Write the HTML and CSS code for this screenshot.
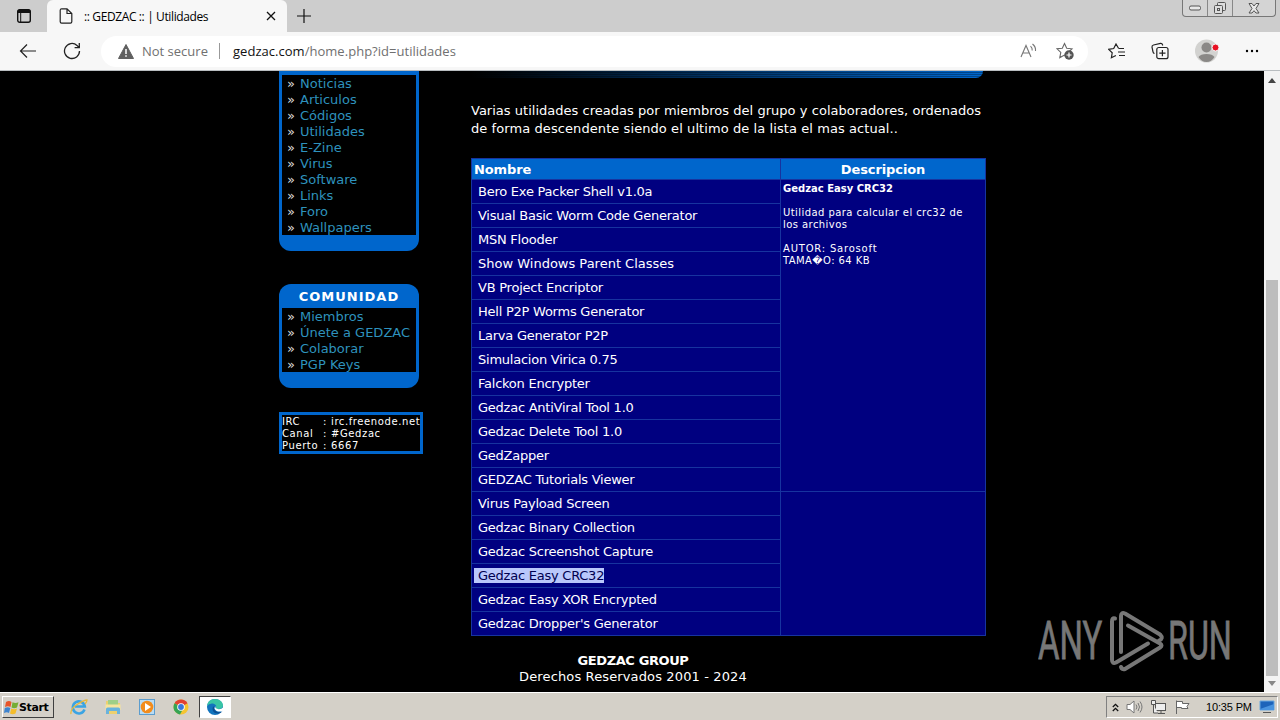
FILE: index.html
```html
<!DOCTYPE html>
<html lang="es">
<head>
    <meta charset="UTF-8">
    <title>:: GEDZAC :: | Utilidades</title>
    <link rel="stylesheet" href="styles.css">
</head>
<body>
    <div class="tabstrip">
        <svg class="tab-actions" width="16" height="16" viewBox="0 0 16 16"><rect x="1.7" y="1.7" width="12.6" height="12.6" rx="2" fill="none" stroke="#111" stroke-width="1.4"/><path d="M1.5 3.5q0-2 2-2h9q2 0 2 2V5h-13z" fill="#111"/><path d="M4.7 5v9" stroke="#111"/></svg>
        <div class="tab">
            <svg width="14" height="16" viewBox="0 0 14 16" fill="none" stroke="#222" stroke-width="1.2"><path d="M8 .8H2.6Q1.2.8 1.2 2.2v11.6q0 1.4 1.4 1.4h8.8q1.4 0 1.4-1.4V5.5zM8 .8v4.700h4.800"/></svg>
            <span class="tab-title">:: GEDZAC :: | Utilidades</span>
            <svg width="10" height="10" viewBox="0 0 10 10" stroke="#111" stroke-width="1.3"><path d="M1 1l8 8M9 1L1 9"/></svg>
        </div>
        <svg class="new-tab" width="16" height="16" viewBox="0 0 16 16" stroke="#111" stroke-width="1.2"><path d="M8 1v14M1 8h14"/></svg>
        <div class="win-buttons">
            <span class="win-btn"><svg width="12" height="6" viewBox="0 0 12 6"><rect x=".5" y="1" width="11" height="4" rx="1.5" fill="#e8e8e8" stroke="#555"/></svg></span>
            <span class="win-btn"><svg width="14" height="14" viewBox="0 0 14 14" fill="#ddd" stroke="#555"><rect x="4.500" y="1.500" width="8" height="8" rx="1"/><rect x="1.500" y="4.500" width="8" height="8" rx="1"/><rect x="4.500" y="7.500" width="2" height="2"/></svg></span>
            <span class="win-btn win-close"><svg width="12" height="11" viewBox="0 0 12 11" fill="#e8e8e8" stroke="#555"><path d="M1 .5h3L6 3l2-2.500h3L8 5.500l3 4.500H8L6 7.700 4 10H1l3-4.500z"/></svg></span>
        </div>
    </div>

    <div class="toolbar">
        <span class="tool back"><svg width="18" height="16" viewBox="0 0 18 16" fill="none" stroke="#222" stroke-width="1.2"><path d="M17 8H1.500M8 1.500L1.500 8 8 14.500"/></svg></span>
        <span class="tool reload"><svg width="18" height="18" viewBox="0 0 18 18" fill="none" stroke="#222" stroke-width="1.3"><path d="M16.500 9A7.500 7.500 0 1 1 14 3.400L16 5.500M16.300 1v4.700h-4.700"/></svg></span>
        <div class="address">
            <svg width="16" height="15" viewBox="0 0 16 15"><path d="M8 .5L15.500 14.500H.5z" fill="#606060" stroke="#606060" stroke-linejoin="round"/><path d="M8 5v5M8 11.200v1.500" stroke="#fff" stroke-width="1.5"/></svg>
            <span class="not-secure">Not secure</span>
            <span class="divider"></span>
            <span class="url"><span class="host">gedzac.com</span>/home.php?id=utilidades</span>
            <svg class="read-aloud" width="17" height="16" viewBox="0 0 17 16" fill="none" stroke="#777" stroke-width="1.1"><path d="M1 14L6 2.500 11 14M2.800 10h6.500M10.500 3.200q2 1.800 1.700 4.300M12.500 1q3.500 2.800 3 7"/></svg>
            <svg width="18" height="18" viewBox="0 0 18 18"><path d="M8.500 1.500l2.200 4.700 5.300.6-3.900 3.600 1 5.200-4.600-2.500-4.700 2.500 1-5.200L1 6.800l5.300-.6z" fill="none" stroke="#666" stroke-width="1.1"/><circle cx="13" cy="13" r="4.700" fill="#555"/><path d="M13 10.500v5M10.500 13h5" stroke="#fff" stroke-width="1.2"/></svg>
        </div>
        <span class="tool favorites"><svg width="18" height="16" viewBox="0 0 18 16" fill="none" stroke="#222" stroke-width="1.2"><path d="M10.500 5.300L8 1 5.700 5.500l-5 .8 3.500 3.500-.8 5 4.500-2.300M10.500 5.500H16M10 9h7M11 12.500h6"/></svg></span>
        <span class="tool collections"><svg width="18" height="18" viewBox="0 0 18 18" fill="none" stroke="#222" stroke-width="1.2"><path d="M3.500 11.500q-1.200-.3-1.500-1.700L1 5.200q-.2-1.800 1.500-2.200l7-1.700q1.600-.2 2 1.400l.2.800"/><rect x="5.800" y="5.500" width="11.2" height="11.2" rx="2"/><path d="M11.400 8v6.200M8.300 11.100h6.200"/></svg></span>
        <span class="tool profile"><svg width="24" height="24" viewBox="0 0 24 24"><circle cx="11.500" cy="12" r="11.500" fill="#d2d2d0"/><circle cx="11.500" cy="8.500" r="5" fill="#8a8886"/><path d="M3.500 18q2-3 8-3t8 3q-3 5-8 5t-8-5z" fill="#8a8886"/><circle cx="20.500" cy="8.500" r="3.500" fill="#e81123" stroke="#f7f7f7"/></svg></span>
        <span class="tool more"><svg width="14" height="4" viewBox="0 0 14 4"><circle cx="2" cy="2" r="1.200"/><circle cx="7" cy="2" r="1.200"/><circle cx="12" cy="2" r="1.200"/></svg></span>
    </div>

    <div class="viewport">
        <div class="page">
            <div class="sidebar">
                <div class="menu menu-main">
                    <ul>
                        <li><a>Noticias</a></li>
                        <li><a>Articulos</a></li>
                        <li><a>Códigos</a></li>
                        <li><a>Utilidades</a></li>
                        <li><a>E-Zine</a></li>
                        <li><a>Virus</a></li>
                        <li><a>Software</a></li>
                        <li><a>Links</a></li>
                        <li><a>Foro</a></li>
                        <li><a>Wallpapers</a></li>
                    </ul>
                </div>
                <div class="menu">
                    <h2>COMUNIDAD</h2>
                    <ul>
                        <li><a>Miembros</a></li>
                        <li><a>Únete a GEDZAC</a></li>
                        <li><a>Colaborar</a></li>
                        <li><a>PGP Keys</a></li>
                    </ul>
                </div>
                <div class="irc">
                    <span>IRC</span><span>:</span><span>irc.freenode.net</span>
                    <span>Canal</span><span>:</span><span>#Gedzac</span>
                    <span>Puerto</span><span>:</span><span>6667</span>
                </div>
            </div>

            <div class="content">
                <div class="banner"></div>
                <p class="intro">Varias utilidades creadas por miembros del grupo y colaboradores, ordenados <span class="second">de forma descendente siendo el ultimo de la lista el mas actual..</span></p>
                <div class="utils">
                    <div class="names">
                        <div class="head">Nombre</div>
                        <div class="row">Bero Exe Packer Shell v1.0a</div>
                        <div class="row">Visual Basic Worm Code Generator</div>
                        <div class="row">MSN Flooder</div>
                        <div class="row wide">Show Windows Parent Classes</div>
                        <div class="row">VB Project Encriptor</div>
                        <div class="row">Hell P2P Worms Generator</div>
                        <div class="row">Larva Generator P2P</div>
                        <div class="row">Simulacion Virica 0.75</div>
                        <div class="row">Falckon Encrypter</div>
                        <div class="row">Gedzac AntiViral Tool 1.0</div>
                        <div class="row">Gedzac Delete Tool 1.0</div>
                        <div class="row">GedZapper</div>
                        <div class="row">GEDZAC Tutorials Viewer</div>
                        <div class="row">Virus Payload Screen</div>
                        <div class="row">Gedzac Binary Collection</div>
                        <div class="row">Gedzac Screenshot Capture</div>
                        <div class="row"><span class="selected">Gedzac Easy CRC32</span></div>
                        <div class="row">Gedzac Easy XOR Encrypted</div>
                        <div class="row">Gedzac Dropper's Generator</div>
                    </div>
                    <div class="details">
                        <div class="head">Descripcion</div>
                        <div class="description">
                            <b>Gedzac Easy CRC32</b><br><br>
                            Utilidad para calcular el crc32 de<br>los archivos<br><br>
                            <span class="author">AUTOR: Sarosoft</span><br>
                            TAMA&#xFFFD;O: 64 KB
                        </div>
                    </div>
                </div>
                <div class="footer">
                    <b>GEDZAC GROUP</b>
                    <span>Derechos Reservados 2001 - 2024</span>
                </div>
            </div>
        </div>
        <div class="scrollbar">
            <svg width="8" height="5" viewBox="0 0 8 5"><path d="M0 5l4-5 4 5z" fill="#444"/></svg>
            <div class="thumb"></div>
            <svg width="8" height="5" viewBox="0 0 8 5"><path d="M0 0l4 5 4-5z" fill="#888"/></svg>
        </div>
        <svg class="watermark" width="210" height="64" viewBox="0 0 210 64">
            <g fill="#777" stroke="#777" stroke-width=".8">
                <text transform="translate(0 50) scale(.62 1)">ANY</text>
                <text transform="translate(130 50) scale(.61 1)">RUN</text>
            </g>
            <g fill="none" stroke="#777" stroke-width="4" stroke-linecap="round" stroke-linejoin="round">
                <path d="M77 9.500q-3-1-3 3v38q0 5 4 3l32-19"/>
                <path d="M83 43V7q0-4 4-2.500l35 21q4 4-1 6"/>
                <path d="M90 16.500l32 18q3 2 0 4L87 60q-3 1-4-2"/>
            </g>
        </svg>
    </div>

    <div class="taskbar">
        <div class="start">
            <svg width="15" height="15" viewBox="0 0 15 15"><path d="M2 2q3-2 5.500 0L6.500 7Q4 5.500 1 7z" fill="#e8552a"/><path d="M8.500 2.300q3 1.500 6 0L13 7.500q-3 1.500-5.500 0z" fill="#75ad35"/><path d="M.8 8q3-1.500 5.500 0L5 13q-2-1.500-5 0z" fill="#3e84cf"/><path d="M7.300 8.500q3 1.500 5.700 0l-1.500 5q-3 1.500-5.500 0z" fill="#f4bd2b"/></svg>
            <span>Start</span>
        </div>
        <div class="launchers">
            <svg width="18" height="18" viewBox="0 0 18 18" fill="none"><path d="M14.500 11.500a6 6 0 1 1 .3-3H5" stroke="#3ba4e3" stroke-width="2.6"/><path d="M1 16Q0 11 7 6.500T17 2q0 2-2 4" stroke="#e8b93c" stroke-width="1.3"/></svg>
            <svg width="18" height="18" viewBox="0 0 18 18"><path d="M2 3h5l1 2h8v11H2z" fill="#ecd06f"/><path d="M4 2h10v6H4z" fill="#9fcf87"/><path d="M1.500 6.500h15V12h-15z" fill="#f7e49d"/><path d="M2 16v-5q0-1.500 1.500-1.500h11q1.500 0 1.500 1.500v5h-3v-3H5v3z" fill="#69b3dd"/></svg>
            <svg width="18" height="18" viewBox="0 0 18 18"><rect x="1.500" y="1.500" width="15" height="15" fill="#b9dcf4" stroke="#5c9dce"/><circle cx="9" cy="9" r="6.300" fill="#f28c1c"/><path d="M7 5l6 4-6 4z" fill="#fff"/></svg>
            <svg width="18" height="18" viewBox="0 0 18 18"><circle cx="9" cy="9" r="7.500" fill="#f5c531"/><path d="M9 9L2.500 5.200A7.500 7.500 0 0 1 15.500 5.200z" fill="#e24133"/><path d="M9 9L2.500 5.200A7.500 7.500 0 0 0 8 16.400l3-5.400z" fill="#35a455"/><circle cx="9" cy="9" r="3.800" fill="#fff"/><circle cx="9" cy="9" r="2.900" fill="#3a78dc"/></svg>
            <span class="active"><svg width="18" height="18" viewBox="0 0 18 18"><circle cx="9" cy="9" r="8" fill="#1274bd"/><path d="M1 8Q2 1 9 1t8 6.500q-.5 3.500-4.500 3.500-3.500 0-2.500-2T7 5.500Q3 5 1 8z" fill="#39c5a5"/><path d="M7 8.500q-2 6 4 7 3 .5 5.500-2-3 1.500-6 0T8.500 9z" fill="#0b4f93"/><path d="M10 8q-1 1-.3 2 1.500 1.500 4.500 1 2-.5 2.500-1.500l1.500 2.500-3 1.500q-5 .5-6.500-2.500-.7-2 1.300-3z" fill="#fff"/></svg></span>
        </div>
        <div class="tray">
            <svg width="7" height="9" viewBox="0 0 7 9" fill="none" stroke="#111" stroke-width="1.3"><path d="M.8 4l2.700-2.700L6.200 4M.8 8l2.700-2.700L6.200 8"/></svg>
            <svg width="17" height="16" viewBox="0 0 17 16" fill="none" stroke="#777"><path d="M1 5.500h3L8 2v12l-4-3.500H1z" fill="#fff"/><path d="M10 5.500q2 2.500 0 5M12 4q3 4 0 8M14 2.500q4 5.500 0 11"/></svg>
            <svg width="17" height="16" viewBox="0 0 17 16" fill="#eee" stroke="#555"><rect x="5.500" y="4.500" width="10" height="7"/><path d="M8 14.500h7M11 12v2M1.500 1.500h4v4h-4zM3.500 6v8H8"/></svg>
            <svg width="17" height="16" viewBox="0 0 17 16" fill="#fff" stroke="#666"><path d="M2.500 15V1.500M2.500 2.500h6v2H15l-2 3 1 2H7.500v-1h-5z"/></svg>
            <span class="clock">10:35 PM</span>
            <svg width="16" height="14" viewBox="0 0 16 14"><path d="M1 1h14v9H1z" fill="#1d64ba" stroke="#6aa8df"/><path d="M1 9l14-5v6H1z" fill="#4a94df"/><path d="M4 12.500h8" stroke="#555"/></svg>
        </div>
    </div>
</body>
</html>
```

FILE: styles.css
```css
* {
    box-sizing: border-box;
}

body {
    margin: 0;
    width: 1280px;
    height: 720px;
    overflow: hidden;
    display: flex;
    flex-direction: column;
    background: #000;
    font-family: "DejaVu Sans", sans-serif;
    font-size: 13px;
}

svg {
    display: block;
    flex-shrink: 0;
}

/* browser chrome */
.tabstrip {
    height: 32px;
    display: flex;
    align-items: center;
    background: #cdcdcd;
    font-family: "Open Sans", sans-serif;
}

.tab-actions {
    margin: 0 15px 0 16px;
}

.tab {
    width: 240px;
    height: 32px;
    padding: 0 11px 0 12px;
    display: flex;
    align-items: center;
    background: #f7f7f7;
    border-radius: 6px 6px 0 0;
}

.tab-title {
    flex: 1;
    padding-left: 11px;
    font-size: 12px;
    letter-spacing: -0.38px;
    white-space: nowrap;
}

.new-tab {
    margin-left: 9px;
}

.win-buttons {
    display: flex;
    align-self: flex-start;
    height: 17px;
    margin: 0 4px 0 auto;
    border: 1px solid #777;
    border-top: 0;
    border-radius: 0 0 4px 4px;
    background: #d4d4d4;
}

.win-btn {
    width: 25px;
    display: flex;
    align-items: center;
    justify-content: center;
    border-right: 1px solid #888;
}

.win-close {
    width: 42px;
    border-right: 0;
}

.toolbar {
    height: 39px;
    padding-left: 6px;
    display: flex;
    align-items: center;
    background: #f7f7f7;
    border-bottom: 1px solid #b9bdc0;
    font-family: "Open Sans", sans-serif;
    font-size: 13px;
}

.tool {
    width: 43px;
    display: flex;
    justify-content: center;
}

.back {
    width: 44px;
}

.address {
    width: 987px;
    height: 31px;
    margin: 0 7px 0 8px;
    padding: 0 14px 0 17px;
    display: flex;
    align-items: center;
    background: #fff;
    border-radius: 16px;
    color: #707070;
}

.not-secure {
    width: 85px;
    padding-left: 8px;
    white-space: nowrap;
}

.divider {
    width: 1px;
    height: 16px;
    margin-right: 13px;
    background: #999;
}

.url {
    letter-spacing: 0.03px;
}

.host {
    color: #111;
}

.read-aloud {
    margin: 0 19px 0 auto;
}

.profile {
    width: 51px;
}

.more {
    width: 40px;
}

/* page */
.viewport {
    position: relative;
    height: 621px;
    display: flex;
}

.page {
    width: 1264px;
    padding-left: 279px;
    display: flex;
    background: #000;
    color: #fff;
}

.sidebar {
    width: 144px;
    margin-right: 48px;
}

.menu {
    width: 140px;
    margin-bottom: 24px;
    padding: 0 3px 16px;
    background: #0066cc;
    border-radius: 12px;
}

.menu-main {
    margin-bottom: 33px;
    padding-top: 4px;
    border-radius: 0 0 12px 12px;
}

.menu h2 {
    height: 24px;
    margin: 0;
    font-size: 13px;
    line-height: 25px;
    letter-spacing: 1px;
    text-align: center;
}

.menu ul {
    margin: 0;
    padding: 0 0 0 5px;
    list-style: none;
    background: #000;
}

.menu li {
    height: 16px;
    line-height: 17px;
    color: #ddd;
    white-space: nowrap;
}

.menu li::before {
    content: "»";
    display: inline-block;
    width: 13px;
}

.menu a {
    color: #2e92bd;
}

.irc {
    width: 144px;
    height: 42px;
    border: 3px solid #0066cc;
    display: grid;
    grid-template-columns: 41px 8px 1fr;
    grid-auto-rows: 12px;
    font-size: 10px;
    line-height: 13px;
    letter-spacing: 0.6px;
    white-space: nowrap;
}

.content {
    width: 515px;
}

.banner {
    height: 7px;
    width: 512px;
    border-radius: 0 0 9px 0;
    background: repeating-linear-gradient(transparent 0 1px, rgba(0, 0, 0, 0.3) 1px 2px), linear-gradient(90deg, #000, #0066cc);
}

.intro {
    width: 510px;
    margin: 24px 0 20px;
    line-height: 18px;
    text-align: justify;
}

.second {
    letter-spacing: 0.08px;
}

.utils {
    height: 478px;
    display: grid;
    grid-template-columns: 308px 206px;
    background: #000080;
    border: 1px solid #17339f;
    border-right: 0;
}

.head {
    height: 20px;
    line-height: 21px;
    font-weight: bold;
    letter-spacing: -0.1px;
    background: #0066cc;
}

.names .head {
    padding-left: 2px;
}

.row {
    height: 24px;
    padding-left: 6px;
    line-height: 23px;
    letter-spacing: -0.24px;
    border-top: 1px solid #17339f;
}

.wide {
    letter-spacing: 0;
}

.details {
    border: 1px solid #17339f;
    border-width: 0 1px;
}

.details .head {
    text-align: center;
}

.description {
    height: 313px;
    padding: 3px 2px;
    border: 1px solid #17339f;
    border-width: 1px 0;
    font-size: 10px;
    line-height: 12px;
    letter-spacing: 0.43px;
    white-space: nowrap;
}

.description b {
    letter-spacing: 0;
}

.author {
    letter-spacing: 0.8px;
}

.selected {
    margin-left: -4px;
    padding-left: 4px;
    background: #b9c7fb;
    color: #000050;
}

.footer {
    width: 324px;
    margin-top: 17px;
    display: flex;
    flex-direction: column;
    align-items: center;
    line-height: 16px;
    letter-spacing: 0.13px;
    white-space: nowrap;
}

.footer b {
    letter-spacing: -0.4px;
}

.scrollbar {
    width: 16px;
    padding: 7px 0 6px;
    display: flex;
    flex-direction: column;
    align-items: center;
    background: #f3f3f3;
}

.thumb {
    width: 12px;
    height: 396px;
    margin: auto 0 5px;
    background: #bdbdbd;
}

.watermark {
    position: absolute;
    left: 1038px;
    top: 538px;
    font-family: Roboto, sans-serif;
    font-size: 53px;
}

/* windows taskbar */
.taskbar {
    height: 28px;
    padding: 3px 2px 2px;
    display: flex;
    background: #d4d0c8;
    border-top: 1px solid #fff;
    font-family: "Liberation Sans", sans-serif;
}

.start {
    width: 52px;
    padding-left: 1px;
    display: flex;
    align-items: center;
    border: 1px solid;
    border-color: #fff #404040 #404040 #fff;
    font-family: "DejaVu Sans", sans-serif;
    font-size: 11px;
    font-weight: bold;
    letter-spacing: -0.4px;
}

.launchers {
    display: flex;
    align-items: center;
    gap: 16px;
    padding-left: 16px;
}

.active {
    width: 32px;
    height: 22px;
    margin-left: -7px;
    display: flex;
    align-items: center;
    justify-content: center;
    background: #fff;
    border: 1px solid;
    border-color: #404040 #fff #fff #404040;
}

.tray {
    width: 172px;
    margin-left: auto;
    padding: 0 2px 0 5px;
    display: flex;
    align-items: center;
    gap: 7px;
    border: 1px solid;
    border-color: #808080 #fff #fff #808080;
    font-size: 11px;
}

.clock {
    margin: 0 0 0 8px;
    letter-spacing: -0.15px;
    white-space: nowrap;
}
```
